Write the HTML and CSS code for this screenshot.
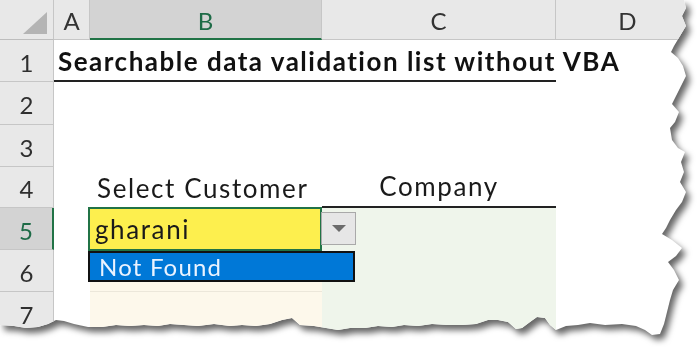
FILE: index.html
```html
<!DOCTYPE html>
<html lang="en">
  <head>
    <meta charset="UTF-8" />
    <title>Searchable data validation list</title>
    <link rel="stylesheet" href="styles.css">
  </head>
  <body>
    <div class="paper">
      <div class="sheet">
        <!-- column headers -->
        <div class="corner"><span class="corner-tri"></span></div>
        <div class="col-head">A</div>
        <div class="col-head active">B</div>
        <div class="col-head">C</div>
        <div class="col-head">D</div>

        <!-- row 1 -->
        <div class="row-head">1</div>
        <div class="cell title">Searchable data validation list without VBA</div>
        <div class="cell"></div>

        <!-- row 2 -->
        <div class="row-head">2</div>
        <div class="cell"></div>
        <div class="cell"></div>
        <div class="cell"></div>
        <div class="cell"></div>

        <!-- row 3 -->
        <div class="row-head">3</div>
        <div class="cell"></div>
        <div class="cell"></div>
        <div class="cell"></div>
        <div class="cell"></div>

        <!-- row 4 -->
        <div class="row-head">4</div>
        <div class="cell"></div>
        <div class="cell label">Select Customer</div>
        <div class="cell label center underline">Company</div>
        <div class="cell"></div>

        <!-- row 5 -->
        <div class="row-head active">5</div>
        <div class="cell"></div>
        <div class="cell input">
          gharani
          <span class="drop-btn"><span class="drop-arrow"></span></span>
          <div class="drop-list">Not Found</div>
        </div>
        <div class="cell green"></div>
        <div class="cell"></div>

        <!-- row 6 -->
        <div class="row-head">6</div>
        <div class="cell"></div>
        <div class="cell cream"></div>
        <div class="cell green"></div>
        <div class="cell"></div>

        <!-- row 7 -->
        <div class="row-head">7</div>
        <div class="cell"></div>
        <div class="cell cream"></div>
        <div class="cell green"></div>
        <div class="cell"></div>
      </div>
    </div>
  </body>
</html>
```

FILE: styles.css
```css
body {
  margin: 0;
  background-color: #fff;
  font-family: Lato, "Open Sans", sans-serif;
}

.paper {
  width: 700px;
  height: 352px;
  filter: drop-shadow(4px 5px 3px rgba(0, 0, 0, 0.6));
}

/* torn paper edge on the right and bottom */
.sheet {
  display: grid;
  grid-template-columns: 54px 36px 232px 234px 1fr;
  grid-template-rows: 40px 42px 43px 42px 41px 42px 42px 42px;
  width: 700px;
  height: 352px;
  background-color: #fff;
  clip-path: polygon(
    0 0, 684px 0, 686px 8px, 682px 16px, 686px 26px, 680px 36px, 674px 46px,
    671px 52px, 678px 58px, 683px 66px, 686px 76px, 681px 86px, 676px 96px,
    672px 104px, 679px 112px, 675px 122px, 670px 128px, 672px 140px,
    678px 148px, 685px 152px, 681px 162px, 684px 172px, 680px 182px,
    686px 192px, 682px 202px, 676px 210px, 670px 220px, 666px 228px,
    662px 234px, 672px 240px, 682px 248px, 676px 256px, 668px 262px,
    674px 270px, 679px 280px, 673px 290px, 670px 300px, 667px 312px,
    664px 324px, 660px 334px, 652px 335px, 645px 330px, 636px 326px,
    622px 324px, 605px 325px, 590px 323px, 578px 325px, 566px 326px,
    556px 330px, 550px 325px, 545px 318px, 537px 317px, 530px 322px,
    522px 328px, 516px 329px, 508px 322px, 498px 320px, 488px 320px,
    476px 324px, 462px 325px, 448px 325px, 432px 324px, 418px 326px,
    404px 325px, 392px 327px, 378px 326px, 365px 328px, 350px 328px,
    338px 330px, 326px 328px, 314px 326px, 300px 325px, 292px 318px,
    282px 320px, 270px 324px, 256px 326px, 242px 325px, 230px 326px,
    214px 324px, 198px 326px, 184px 325px, 170px 324px, 158px 326px,
    144px 325px, 130px 326px, 116px 325px, 102px 327px, 88px 327px,
    74px 324px, 64px 321px, 56px 320px, 48px 324px, 38px 327px,
    26px 328px, 14px 326px, 0 325px
  );
}

.corner,
.col-head,
.row-head {
  display: flex;
  align-items: center;
  justify-content: center;
  box-sizing: border-box;
  background-color: #e8e8e8;
  border-right: 1px solid #c6c6c6;
  border-bottom: 1px solid #c6c6c6;
  color: #333;
  font-size: 24px;
}

.corner {
  position: relative;
  border-bottom-color: #bdbdbd;
}

.corner-tri {
  position: absolute;
  right: 6px;
  bottom: 5px;
  width: 0;
  height: 0;
  border-left: 24px solid transparent;
  border-bottom: 22px solid #b4b4b4;
}

.col-head {
  padding-top: 2px;
}

.col-head.active {
  background-color: #d3d3d3;
  color: #1e6b47;
  border-bottom: 2px solid #217346;
}

.row-head {
  color: #2f2f2f;
  padding-top: 3px;
}

.row-head.active {
  background-color: #d3d3d3;
  color: #1e6b47;
  border-right: 2px solid #217346;
}

.cell {
  display: flex;
  align-items: flex-end;
  box-sizing: border-box;
  min-width: 0;
  font-size: 26px;
  letter-spacing: 1.6px;
  color: #1a1a1a;
}

.title {
  grid-column: 2 / 5;
  padding: 0 0 3px 4px;
  white-space: nowrap;
  font-weight: bold;
  font-size: 26px;
  letter-spacing: 1.5px;
  color: #111;
  border-bottom: 2px solid #222;
}

.label {
  padding: 0 0 4px 7px;
  white-space: nowrap;
}

.center {
  justify-content: center;
  padding-left: 0;
}

.underline {
  border-bottom: 2px solid #222;
}

.input {
  position: relative;
  padding: 0 0 4px 5px;
  background-color: #fdef4e;
  border: 2px solid #217346;
  margin: -1px 0 -1px -2px;
}

.drop-btn {
  position: absolute;
  left: 100%;
  top: 3px;
  width: 35px;
  height: 33px;
  box-sizing: border-box;
  display: flex;
  align-items: center;
  justify-content: center;
  background-color: #e6e6e6;
  border: 1px solid #a9a9a9;
  margin-left: 1px;
}

.drop-arrow {
  width: 0;
  height: 0;
  border-left: 7px solid transparent;
  border-right: 7px solid transparent;
  border-top: 7px solid #6b6b6b;
}

.drop-list {
  position: absolute;
  left: -2px;
  top: 100%;
  width: 267px;
  height: 31px;
  box-sizing: border-box;
  margin-top: 2px;
  padding: 0 0 0 9px;
  display: flex;
  align-items: center;
  background-color: #0078d7;
  border: 2px solid #111;
  color: #eaf3ff;
  font-size: 24px;
  letter-spacing: 1.2px;
}

.green {
  background-color: #eff5eb;
}

.cream {
  background-color: #fdf8eb;
  border-bottom: 1px solid #ece7da;
}
```
